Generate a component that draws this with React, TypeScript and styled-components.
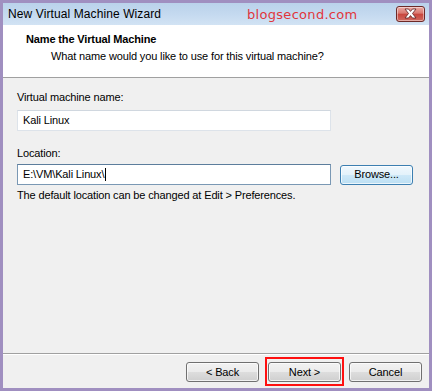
import React from 'react';
import styled, { createGlobalStyle } from 'styled-components';

const GlobalStyle = createGlobalStyle`
  html, body {
    margin: 0;
    padding: 0;
    background: #a08fc0;
  }
  * {
    box-sizing: border-box;
  }
`;

const Frame = styled.div`
  width: 432px;
  height: 391px;
  border: 3px solid #a08fc0;
  background: #f0f0f0;
  display: flex;
  flex-direction: column;
  font-family: Tahoma, "Liberation Sans", Arial, sans-serif;
  font-size: 11px;
  line-height: 13px;
  letter-spacing: -0.14px;
  color: #000;
`;

const TitleBar = styled.div`
  height: 22px;
  flex: none;
  display: flex;
  align-items: center;
  padding: 0 4px 0 5px;
  background: linear-gradient(to bottom, #bad2eb 0%, #c4d9ef 50%, #d2e3f4 100%);
`;

const TitleText = styled.span`
  font-size: 12px;
  letter-spacing: 0.1px;
  color: #000;
  width: 239px;
`;

const Watermark = styled.span`
  font-family: "DejaVu Sans", Verdana, sans-serif;
  font-size: 13px;
  color: #e0363c;
  letter-spacing: 0.3px;
  flex: 1;
`;

const CloseButton = styled.div`
  width: 29px;
  height: 16px;
  margin-bottom: 1px;
  border: 1px solid #6d2a28;
  border-radius: 3px;
  display: flex;
  align-items: center;
  justify-content: center;
  background: linear-gradient(to bottom, #ecaaa3 0%, #d9786f 45%, #c8453c 50%, #d06a60 100%);
  box-shadow: inset 0 0 0 1px rgba(255, 255, 255, 0.45);
`;

const Header = styled.div`
  height: 53px;
  flex: none;
  background: #fff;
  border-bottom: 1px solid #a0a0a0;
  padding: 8px 0 0 23px;
`;

const HeaderTitle = styled.div`
  font-weight: bold;
`;

const HeaderSubtitle = styled.div`
  margin-top: 4px;
  padding-left: 25px;
`;

const Body = styled.div`
  flex: 1;
  padding: 13px 0 0 14px;
  display: flex;
  flex-direction: column;
`;

const Label = styled.div<{ $gap: number }>`
  margin-top: ${({ $gap }) => $gap}px;
`;

const Row = styled.div<{ $gap: number }>`
  display: flex;
  align-items: center;
  gap: 9px;
  margin-top: ${({ $gap }) => $gap}px;
`;

const TextBox = styled.div<{ $focused?: boolean }>`
  width: 314px;
  height: 21px;
  background: #fff;
  border: 1px solid ${({ $focused }) => ($focused ? '#7a98b4' : '#dde3ea')};
  border-top-color: ${({ $focused }) => ($focused ? '#5c7d9c' : '#d0d7df')};
  padding: 0 5px;
  display: flex;
  align-items: center;
  white-space: pre;
`;

const Caret = styled.span`
  display: inline-block;
  width: 1px;
  height: 13px;
  background: #000;
  margin-left: 1px;
`;

const Button = styled.button<{ $focus?: boolean }>`
  width: 73px;
  height: 20px;
  padding: 0;
  font: inherit;
  letter-spacing: inherit;
  color: #000;
  border-radius: 3px;
  border: 1px solid ${({ $focus }) => ($focus ? '#3c7fb1' : '#707070')};
  background: ${({ $focus }) =>
    $focus
      ? 'linear-gradient(to bottom, #f1f8fd 0%, #e3f2fb 48%, #cde8f8 52%, #bcdff3 100%)'
      : 'linear-gradient(to bottom, #f2f2f2 0%, #ebebeb 48%, #dddddd 52%, #cfcfcf 100%)'};
  box-shadow: inset 0 0 0 1px rgba(255, 255, 255, 0.7);
`;

const Hint = styled.div`
  margin-top: 4px;
`;

const Footer = styled.div`
  height: 35px;
  flex: none;
  border-top: 1px solid #a0a0a0;
  display: flex;
  align-items: flex-start;
  justify-content: flex-end;
  padding: 3px 7px 0 0;
  gap: 3px;
  box-shadow: inset 0 1px 0 #fff;
`;

const Highlight = styled.div`
  border: 2px solid #ff1010;
  padding: 3px 1px 2px;
  margin: 0 2px 0 3px;
`;

const FooterButton = styled(Button)`
  margin-top: 5px;
`;

const App: React.FC = () => {
  return (
    <>
      <GlobalStyle />
      <Frame>
        <TitleBar>
          <TitleText>New Virtual Machine Wizard</TitleText>
          <Watermark>blogsecond.com</Watermark>
          <CloseButton>
            <svg width="15" height="11" viewBox="0 0 15 11">
              <path
                d="M2 1 L5.5 1 L7.5 3.4 L9.5 1 L13 1 L9.5 5.5 L13 10 L9.5 10 L7.5 7.6 L5.5 10 L2 10 L5.5 5.5 Z"
                fill="#fff"
                stroke="#5a2020"
                strokeWidth="0.8"
                strokeLinejoin="round"
              />
            </svg>
          </CloseButton>
        </TitleBar>
        <Header>
          <HeaderTitle>Name the Virtual Machine</HeaderTitle>
          <HeaderSubtitle>What name would you like to use for this virtual machine?</HeaderSubtitle>
        </Header>
        <Body>
          <Label $gap={0}>Virtual machine name:</Label>
          <Row $gap={6}>
            <TextBox>Kali Linux</TextBox>
          </Row>
          <Label $gap={16}>Location:</Label>
          <Row $gap={4}>
            <TextBox $focused>
              E:\VM\Kali Linux\
              <Caret />
            </TextBox>
            <Button $focus>Browse...</Button>
          </Row>
          <Hint>The default location can be changed at Edit &gt; Preferences.</Hint>
        </Body>
        <Footer>
          <FooterButton>&lt; Back</FooterButton>
          <Highlight>
            <Button>Next &gt;</Button>
          </Highlight>
          <FooterButton>Cancel</FooterButton>
        </Footer>
      </Frame>
    </>
  );
};

export default App;
